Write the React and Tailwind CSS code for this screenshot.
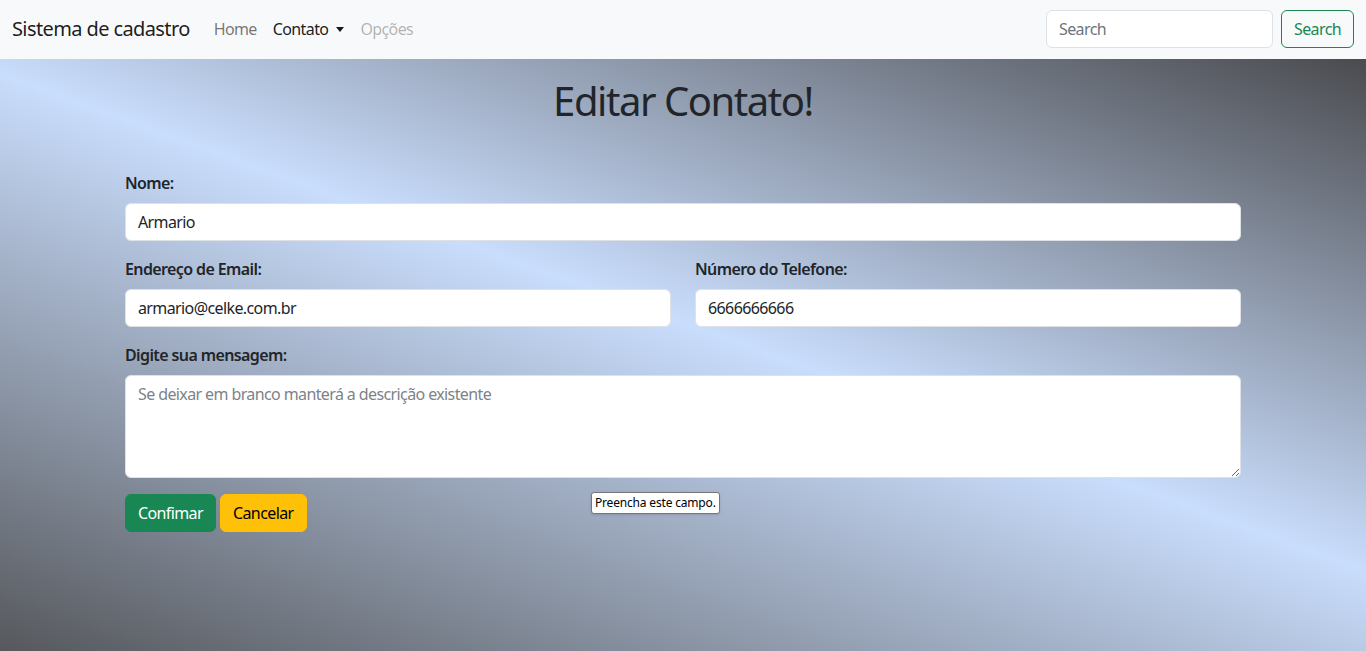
export default function App() {
  return (
    <div className="min-h-screen flex flex-col text-[#212529] tracking-[-0.038em] font-['Segoe_UI','Noto_Sans',sans-serif]">
      {/* Navbar */}
      <nav className="h-[59px] shrink-0 bg-[#f8f9fa] flex items-center px-3 pb-[1px]">
        <span className="text-[20px] text-black/90 mr-4">Sistema de cadastro</span>
        <div className="flex items-center text-[16px]">
          <span className="px-2 text-black/55">Home</span>
          <span className="px-2 text-black/90 flex items-center">
            Contato
            <span className="ml-[8px] border-x-[4px] border-x-transparent border-t-[5px] border-t-black/90"></span>
          </span>
          <span className="px-2 text-black/30">Opções</span>
        </div>
        <div className="ml-auto flex items-center gap-2">
          <input
            placeholder="Search"
            className="w-[227px] h-[38px] rounded-[6px] border border-[#dee2e6] bg-white px-3 text-[16px] placeholder:text-[#6c757d] outline-none"
          />
          <button className="h-[38px] px-3 rounded-[6px] border border-[#198754] text-[#198754] text-[16px]">
            Search
          </button>
        </div>
      </nav>

      {/* Page */}
      <main className="flex-1 bg-[linear-gradient(20deg,#56585c_0%,#c9ddfc_53%,#4a4b4f_100%)]">
        <div className="w-[1140px] mx-auto px-3 pt-[18px] pb-10 relative">
          <h1 className="text-[40px] leading-[48px] tracking-[-0.036em] text-center text-[#212529]">Editar Contato!</h1>

          <form className="mt-[46px]" onSubmit={(e) => e.preventDefault()}>
            <label className="block font-semibold leading-6 mb-2">Nome:</label>
            <input
              defaultValue="Armario"
              className="w-full h-[38px] rounded-[6px] border border-[#dee2e6] bg-white px-3 text-[16px] outline-none"
            />

            <div className="grid grid-cols-2 gap-x-6 mt-4">
              <div>
                <label className="block font-semibold leading-6 mb-2">Endereço de Email:</label>
                <input
                  defaultValue="armario@celke.com.br"
                  className="w-full h-[38px] rounded-[6px] border border-[#dee2e6] bg-white px-3 text-[16px] outline-none"
                />
              </div>
              <div>
                <label className="block font-semibold leading-6 mb-2">Número do Telefone:</label>
                <input
                  defaultValue="6666666666"
                  className="w-full h-[38px] rounded-[6px] border border-[#dee2e6] bg-white px-3 text-[16px] outline-none"
                />
              </div>
            </div>

            <label className="block font-semibold leading-6 mb-2 mt-4">Digite sua mensagem:</label>
            <textarea
              placeholder="Se deixar em branco manterá a descrição existente"
              className="block w-full h-[103px] rounded-[6px] border border-[#dee2e6] bg-white px-3 py-1.5 text-[16px] leading-6 placeholder:text-[#7d8388] outline-none"
            />

            <div className="flex gap-1 mt-4">
              <button className="h-[38px] px-3 rounded-[6px] bg-[#198754] border border-[#198754] text-white text-[16px]">
                Confimar
              </button>
              <button className="h-[38px] px-3 rounded-[6px] bg-[#ffc107] border border-[#ffc107] text-black text-[16px]">
                Cancelar
              </button>
            </div>
          </form>

          {/* validation tooltip */}
          <div className="absolute left-[478px] top-[433px] h-[22px] px-[3px] flex items-center rounded-[3px] border border-[#767676] bg-white text-[12px] tracking-[-0.015em] text-black shadow-sm">
            Preencha este campo.
          </div>
        </div>
      </main>
    </div>
  );
}
